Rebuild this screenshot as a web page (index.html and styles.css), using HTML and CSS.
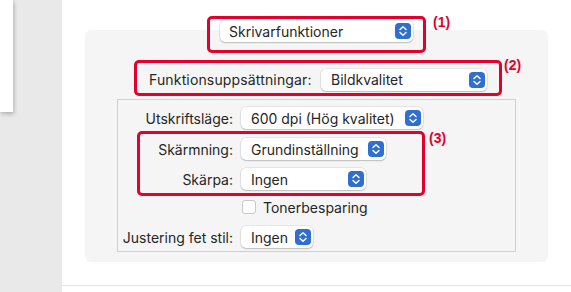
FILE: index.html
```html
<!DOCTYPE html>
<html lang="sv">
<head>
  <meta charset="UTF-8" />
  <meta name="viewport" content="width=device-width, initial-scale=1.0"/>
  <title>Skrivarfunktioner</title>
  <link rel="stylesheet" href="styles.css">
</head>
<body>
  <div class="sidebar">
    <div class="sheet"></div>
  </div>

  <div class="main">
    <div class="mark mark-top">
      <div class="popup popup-func">
        <span>Skrivarfunktioner</span>
        <svg class="stepper" viewBox="0 0 16 16"><rect width="16" height="16" rx="4"/><path d="M5 6.5L8 3.8L11 6.5M5 9.5L8 12.2L11 9.5"/></svg>
      </div>
      <span class="tag tag-1">(1)</span>
    </div>

    <div class="panel">
      <div class="mark mark-set">
        <span class="set-label">Funktionsuppsättningar:</span>
        <div class="popup popup-set">
          <span>Bildkvalitet</span>
          <svg class="stepper" viewBox="0 0 16 16"><rect width="16" height="16" rx="4"/><path d="M5 6.5L8 3.8L11 6.5M5 9.5L8 12.2L11 9.5"/></svg>
        </div>
        <span class="tag tag-2">(2)</span>
      </div>

      <div class="box">
        <div class="row">
          <span class="row-label">Utskriftsläge:</span>
          <div class="popup popup-mode">
            <span>600 dpi (Hög kvalitet)</span>
            <svg class="stepper" viewBox="0 0 16 16"><rect width="16" height="16" rx="4"/><path d="M5 6.5L8 3.8L11 6.5M5 9.5L8 12.2L11 9.5"/></svg>
          </div>
        </div>

        <div class="mark mark-screen">
          <div class="row">
            <span class="row-label">Skärmning:</span>
            <div class="popup popup-screen">
              <span>Grundinställning</span>
              <svg class="stepper" viewBox="0 0 16 16"><rect width="16" height="16" rx="4"/><path d="M5 6.5L8 3.8L11 6.5M5 9.5L8 12.2L11 9.5"/></svg>
            </div>
          </div>
          <div class="row">
            <span class="row-label">Skärpa:</span>
            <div class="popup popup-sharp">
              <span>Ingen</span>
              <svg class="stepper" viewBox="0 0 16 16"><rect width="16" height="16" rx="4"/><path d="M5 6.5L8 3.8L11 6.5M5 9.5L8 12.2L11 9.5"/></svg>
            </div>
          </div>
          <span class="tag tag-3">(3)</span>
        </div>

        <label class="check-row">
          <span class="checkbox"></span>
          <span>Tonerbesparing</span>
        </label>

        <div class="row row-bold">
          <span class="row-label">Justering fet stil:</span>
          <div class="popup popup-bold">
            <span>Ingen</span>
            <svg class="stepper" viewBox="0 0 16 16"><rect width="16" height="16" rx="4"/><path d="M5 6.5L8 3.8L11 6.5M5 9.5L8 12.2L11 9.5"/></svg>
          </div>
        </div>
      </div>
    </div>

    <div class="divider"></div>
  </div>
</body>
</html>
```

FILE: styles.css
```css
:root {
  --text: #262626;
  --red: #e2002c;
  --panel: #f5f5f5;
  --blue: #2f6fd1;
}
body {
  margin: 0;
  width: 571px;
  height: 292px;
  overflow: hidden;
  display: flex;
  background: #fff;
  color: var(--text);
  font-family: Inter, "Liberation Sans", sans-serif;
  font-size: 14px;
}

.sidebar {
  width: 62px;
  height: 292px;
  background: #e9e9e9;
  flex: none;
}
.sheet {
  width: 13px;
  height: 112px;
  background: #fff;
  box-shadow: 1px 2px 4px rgba(0,0,0,0.25);
}

.main {
  flex: 1;
  display: flex;
  flex-direction: column;
  align-items: center;
  padding-top: 16px;
}

/* red annotation frames */
.mark {
  position: relative;
  border: 3px solid var(--red);
  border-radius: 5px;
  box-sizing: border-box;
}
.tag {
  position: absolute;
  color: var(--red);
  font-family: "Liberation Sans", Arial, sans-serif;
  font-weight: bold;
  font-size: 14px;
  line-height: 14px;
}
.tag-1 { left: calc(100% + 10px); top: -4px; }
.tag-2 { left: calc(100% + 5px); top: -5px; }
.tag-3 { left: calc(100% + 7px); top: -3px; }

.mark-top {
  z-index: 1;
  width: 219px;
  height: 37px;
  padding: 1px 10px 0;
}

.panel {
  width: 463px;
  height: 232px;
  margin-top: -23px;
  box-sizing: border-box;
  padding: 30px 0 0 49px;
  background: var(--panel);
  border-radius: 6px;
}

.mark-set {
  width: 368px;
  height: 36px;
  display: flex;
  align-items: center;
  padding: 3px 0 0 12px;
}
.set-label {
  width: 163px;
  margin-right: 9px;
  letter-spacing: 0.15px;
}

.popup {
  display: flex;
  align-items: center;
  justify-content: space-between;
  height: 22px;
  box-sizing: border-box;
  padding: 0 2px 0 9px;
  background: #fff;
  border-radius: 5px;
  box-shadow: 0 0 0 0.5px rgba(0,0,0,0.12), 0 1px 1.5px rgba(0,0,0,0.18);
  white-space: nowrap;
}
.stepper { width: 16px; height: 16px; }
.stepper rect { fill: var(--blue); }
.stepper path {
  fill: none;
  stroke: #fff;
  stroke-width: 1.5;
  stroke-linecap: round;
  stroke-linejoin: round;
}

.popup-func { width: 193px; }
.popup-set { width: 166px; padding-left: 10px; }
.popup-mode { width: 182px; padding-left: 10px; }
.popup-screen { width: 145px; padding-left: 10px; }
.popup-sharp { width: 125px; padding-left: 10px; }
.popup-bold { width: 72px; padding-left: 10px; }

.box {
  width: 399px;
  height: 153px;
  margin: 3px 0 0 -17px;
  box-sizing: border-box;
  padding-top: 7px;
  border: 1px solid #cfcfcf;
}

.row {
  display: flex;
  align-items: center;
  height: 22px;
}
.row-label {
  width: 115px;
  margin-right: 8px;
  text-align: right;
}

.mark-screen {
  width: 288px;
  height: 65px;
  margin: 2px 0 0 19px;
  padding-top: 4px;
  display: flex;
  flex-direction: column;
  gap: 8px;
}
.mark-screen .row-label { width: 93px; }

.check-row {
  display: flex;
  align-items: center;
  height: 14px;
  margin: 4px 0 0 124px;
  gap: 7px;
}
.checkbox {
  width: 14px;
  height: 14px;
  box-sizing: border-box;
  background: #fff;
  border: 1px solid #c9c9c9;
  border-radius: 3px;
}

.row-bold { margin-top: 12px; }

.divider {
  align-self: stretch;
  height: 1px;
  margin-top: 23px;
  background: #e3e3e3;
}
```
